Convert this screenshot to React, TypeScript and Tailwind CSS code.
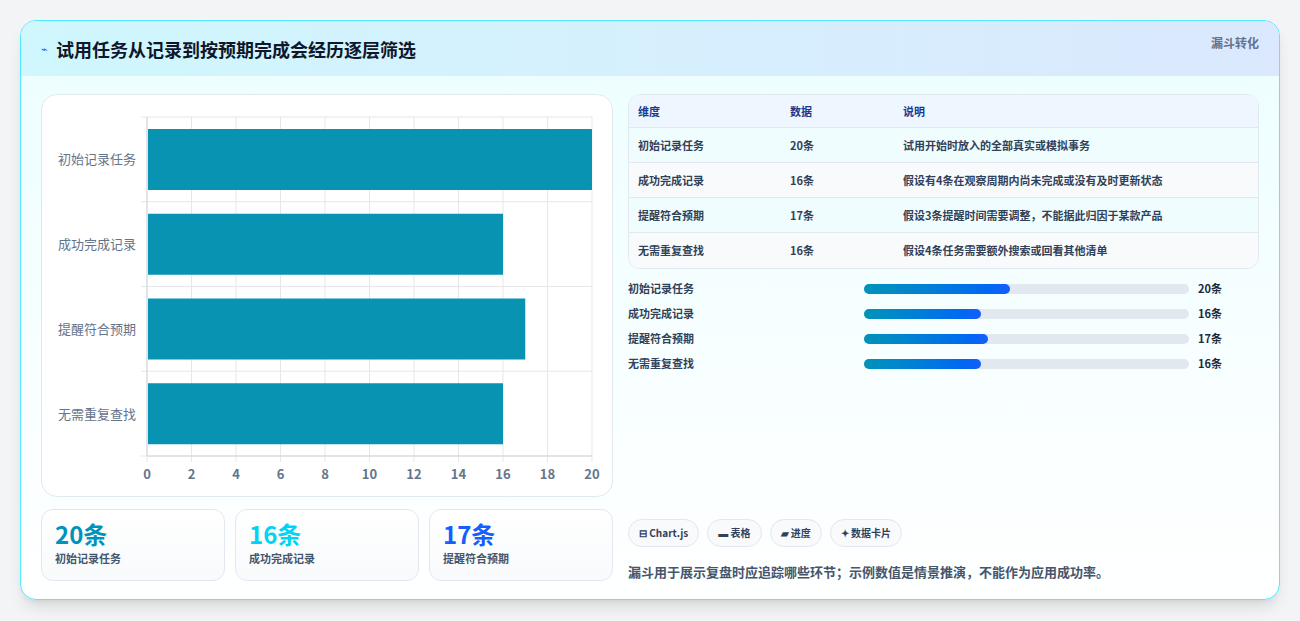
const rows = [
  { label: '初始记录任务', value: 20, note: '试用开始时放入的全部真实或模拟事务' },
  { label: '成功完成记录', value: 16, note: '假设有4条在观察周期内尚未完成或没有及时更新状态' },
  { label: '提醒符合预期', value: 17, note: '假设3条提醒时间需要调整，不能据此归因于某款产品' },
  { label: '无需重复查找', value: 16, note: '假设4条任务需要额外搜索或回看其他清单' },
]

const font = { fontFamily: '"Noto Sans CJK SC", "Noto Sans", sans-serif' }

const Chart = () => {
  const x0 = 105
  const w = 445
  const y0 = 22
  const h = 339
  const band = h / 4
  return (
    <svg width="572" height="403" className="block">
      {Array.from({ length: 11 }, (_, i) => (
        <line key={i} x1={x0 + (w / 10) * i} x2={x0 + (w / 10) * i} y1={y0} y2={y0 + h + 6} stroke="#e5e7eb" />
      ))}
      {[0, 1, 2, 3, 4].map((i) => (
        <line key={i} x1={x0 - 6} x2={x0 + w} y1={y0 + band * i} y2={y0 + band * i} stroke="#e5e7eb" />
      ))}
      <line x1={x0} x2={x0} y1={y0} y2={y0 + h} stroke="#d1d5db" />
      <line x1={x0} x2={x0 + w} y1={y0 + h} y2={y0 + h} stroke="#d1d5db" />
      {rows.map((r, i) => (
        <g key={r.label}>
          <rect x={x0 + 1} y={y0 + band * i + 12} width={(w / 20) * r.value - 1} height={61} fill="#0893b3" />
          <text x={x0 - 11} y={y0 + band * i + band / 2 + 5} textAnchor="end" fontSize="13" fill="#64748b" style={font}>
            {r.label}
          </text>
        </g>
      ))}
      {Array.from({ length: 11 }, (_, i) => (
        <text key={i} x={x0 + (w / 10) * i} y={y0 + h + 23} textAnchor="middle" fontSize="13" fontWeight="700" fill="#64748b" style={font}>
          {i * 2}
        </text>
      ))}
    </svg>
  )
}

const stats = [
  { v: '20条', l: '初始记录任务', c: 'text-cyan-600' },
  { v: '16条', l: '成功完成记录', c: 'text-cyan-400' },
  { v: '17条', l: '提醒符合预期', c: 'text-blue-600' },
]

const App = () => {
  return (
    <div className="h-[621px] w-[1300px] bg-[#f3f4f6] pt-5 px-5" style={font}>
      <div className="h-[580px] overflow-hidden rounded-2xl border border-cyan-300 bg-gradient-to-b from-[#ecfeff] to-white shadow-lg">
        <div className="flex h-[55px] items-center justify-between bg-gradient-to-r from-[#cff7fd] to-[#dbe8fe] pl-5 pr-5">
          <div className="flex items-center gap-2">
            <span className="text-[11px] text-blue-600">⌁</span>
            <h1 className="text-lg font-bold text-slate-900">试用任务从记录到按预期完成会经历逐层筛选</h1>
          </div>
          <span className="-mt-3 text-xs font-semibold text-slate-500">漏斗转化</span>
        </div>
        <div className="flex gap-[15px] px-5 pt-[18px]">
          <div className="flex w-[572px] flex-col gap-3">
            <div className="h-[403px] rounded-2xl border border-slate-200 bg-white">
              <Chart />
            </div>
            <div className="grid grid-cols-3 gap-[10px]">
              {stats.map((s) => (
                <div key={s.l} className="h-[72px] rounded-xl border border-slate-200 bg-gradient-to-b from-white to-slate-50 px-[13px] pt-2">
                  <div className={`text-2xl font-bold ${s.c}`}>{s.v}</div>
                  <div className="text-[11px] font-semibold text-slate-600">{s.l}</div>
                </div>
              ))}
            </div>
          </div>
          <div className="flex w-[633px] flex-col">
            <div className="overflow-hidden rounded-xl border border-slate-200 bg-white text-[11px] font-semibold">
              <div className="flex h-[33px] items-center border-b border-slate-200 bg-[#eef6ff] px-[9px] text-blue-900">
                <span className="w-[152px]">维度</span>
                <span className="w-[113px]">数据</span>
                <span>说明</span>
              </div>
              {rows.map((r, i) => (
                <div key={r.label} className={`flex h-[35px] items-center px-[9px] text-slate-700 ${i < 3 ? 'border-b border-slate-200' : ''} ${i % 2 ? 'bg-[#f8fafc]' : 'bg-[#f0fdff]'}`}>
                  <span className="w-[152px]">{r.label}</span>
                  <span className="w-[113px]">{r.value}条</span>
                  <span>{r.note}</span>
                </div>
              ))}
            </div>
            <div className="mt-[10px] flex flex-col gap-[6px]">
              {rows.map((r) => (
                <div key={r.label} className="flex h-[19px] items-center text-[11px] font-semibold text-slate-700">
                  <span className="w-[236px]">{r.label}</span>
                  <div className="h-[10px] w-[325px] rounded-full bg-slate-200">
                    <div className="h-full rounded-full bg-gradient-to-r from-cyan-600 to-blue-600" style={{ width: `${r.value * 2.25}%` }} />
                  </div>
                  <span className="ml-[9px] font-bold text-slate-800">{r.value}条</span>
                </div>
              ))}
            </div>
            <div className="mt-auto flex gap-2 pb-[3px]">
              {['⊟ Chart.js', '▬ 表格', '▰ 进度', '✦ 数据卡片'].map((c) => (
                <span key={c} className="flex h-[28px] items-center rounded-full border border-slate-200 bg-slate-50 px-[10px] text-[10px] font-bold text-slate-700">
                  {c}
                </span>
              ))}
            </div>
            <p className="mt-3 text-[13px] font-semibold text-slate-600">漏斗用于展示复盘时应追踪哪些环节；示例数值是情景推演，不能作为应用成功率。</p>
          </div>
        </div>
      </div>
    </div>
  )
}

export default App
